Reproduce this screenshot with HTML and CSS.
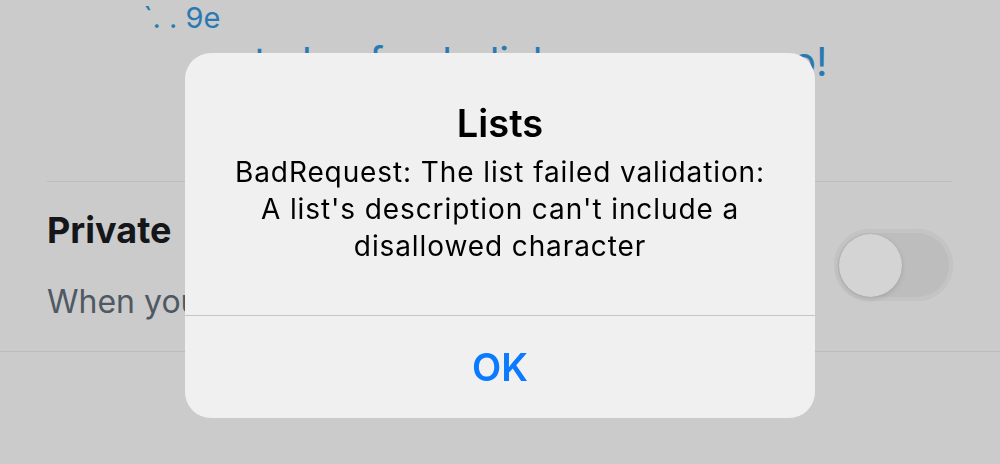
FILE: index.html
```html
<!DOCTYPE html>
<html lang="en">
<head>
    <meta charset="UTF-8">
    <meta name="viewport" content="width=device-width, initial-scale=1.0">
    <title>Edit List</title>
    <link rel="stylesheet" href="styles.css">
</head>
<body>

<div class="screen">
    <div class="bio">
        <div class="bio-line first">ˋ. . 9e</div>
        <div class="bio-line second">to luv fun balink we can see o!</div>
    </div>

    <div class="divider inset"></div>

    <div class="setting">
        <div class="setting-text">
            <div class="setting-title">Private</div>
            <div class="setting-desc">When you make a List private, only you can see it.</div>
        </div>
        <div class="switch">
            <div class="knob"></div>
        </div>
    </div>

    <div class="divider"></div>
</div>

<div class="overlay">
    <div class="alert">
        <div class="alert-body">
            <div class="alert-title">Lists</div>
            <div class="alert-message">BadRequest: The list failed validation: A list's description can't include a disallowed character</div>
        </div>
        <button class="alert-button">OK</button>
    </div>
</div>

</body>
</html>
```

FILE: styles.css
```css
body {
    margin: 0;
    background-color: #cbcbcb;
    font-family: Inter, "Noto Sans", sans-serif;
    overflow: hidden;
}

.screen {
    height: 464px;
}

/* description text peeking out above the alert */
.bio {
    color: #2a79b3;
    white-space: nowrap;
}

.bio-line.first {
    height: 36px;
    padding-left: 142px;
    font-size: 29px;
    line-height: 36px;
}

.bio-line.second {
    height: 45px;
    padding-left: 254px;
    padding-top: 2px;
    font-size: 40px;
    line-height: 47px;
}

.divider {
    height: 1px;
    background-color: #bcbcbc;
}

.divider.inset {
    margin: 98px 48px 0 47px;
}

.setting {
    display: flex;
    align-items: center;
    gap: 24px;
    padding: 26px 47px 29px 47px;
}

.setting-text {
    flex: 1;
    min-width: 0;
    white-space: nowrap;
    overflow: hidden;
}

.setting-title {
    font-size: 36px;
    line-height: 44px;
    font-weight: 700;
    color: #141619;
}

.setting-desc {
    margin-top: 30px;
    font-size: 32px;
    line-height: 40px;
    color: #4f5964;
}

.switch {
    width: 119px;
    height: 72px;
    border-radius: 36px;
    background-color: #bdbdbd;
    box-shadow: inset 0 0 0 4px #c4c4c4;
    display: flex;
    align-items: center;
    padding-left: 5px;
    box-sizing: border-box;
    flex-shrink: 0;
}

.knob {
    width: 63px;
    height: 63px;
    border-radius: 50%;
    background-color: #d4d4d4;
    box-shadow: 0 2px 5px rgba(0, 0, 0, 0.12), 0 0 1px rgba(0, 0, 0, 0.15);
}

.overlay {
    position: fixed;
    top: 0;
    left: 0;
    right: 0;
    bottom: 0;
    display: flex;
    justify-content: center;
    align-items: flex-start;
    padding-top: 53px;
}

.alert {
    width: 630px;
    background-color: #f0f0f0;
    border-radius: 26px;
    overflow: hidden;
    text-align: center;
    color: #000;
}

.alert-body {
    padding: 48px 40px 50px 40px;
    border-bottom: 1px solid #c6c6c6;
}

.alert-title {
    font-size: 38px;
    line-height: 44px;
    font-weight: 600;
}

.alert-message {
    margin-top: 9px;
    font-size: 28px;
    line-height: 37px;
    letter-spacing: 0.9px;
}

.alert-button {
    display: block;
    width: 100%;
    height: 102px;
    border: none;
    background: none;
    padding: 0;
    font-family: inherit;
    font-size: 38px;
    line-height: 102px;
    font-weight: 600;
    color: #0a7aff;
}
```
